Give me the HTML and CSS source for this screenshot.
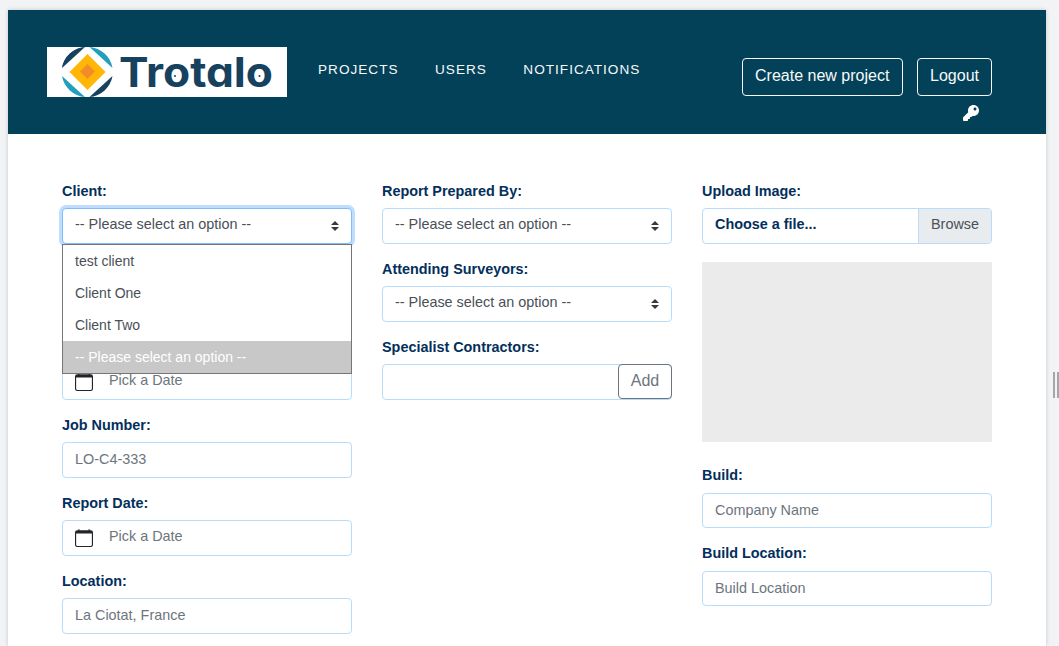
FILE: index.html
```html
<!DOCTYPE html>
<html lang="en">
<head>
<meta charset="utf-8">
<title>Trotalo</title>
<link rel="stylesheet" href="styles.css">
</head>
<body>
<div class="page">
  <header class="header">
    <svg class="logo" viewBox="0 0 240 50" width="240" height="50" role="img" aria-label="Trotalo">
      <rect width="240" height="50" fill="#fff"/>
      <path d="M15 21A25.500 25.500 0 0 1 38 0Q22 6 15 21Z" fill="#17425f"/>
      <path d="M15 21A25.500 25.500 0 0 1 38 0L15 21Z" fill="#17425f"/>
      <path d="M42.500 0A25.500 25.500 0 0 1 65.500 21L42.500 0Z" fill="#239fbd"/>
      <path d="M15 29A25.500 25.500 0 0 0 38 50L15 29Z" fill="#239fbd"/>
      <path d="M65.500 29A25.500 25.500 0 0 1 42.500 50L65.500 29Z" fill="#17425f"/>
      <path d="M40.500 7L58.500 25L40.500 43L22.500 25Z" fill="#ffb606"/>
      <path d="M40.500 17L48 24.500L40.500 32L33 24.500Z" fill="#f28c28"/>
      <text class="wordmark" x="72" y="40" textLength="154" lengthAdjust="spacingAndGlyphs">Trotalo</text>
      <circle cx="128" cy="29" r="1" fill="#17425f"/>
      <circle cx="212.500" cy="29" r="1" fill="#17425f"/>
    </svg>
    <nav class="nav"><a>PROJECTS</a><a>USERS</a><a>NOTIFICATIONS</a></nav>
    <div class="actions">
      <div class="buttons"><a class="btn create">Create new project</a><a class="btn">Logout</a></div>
      <svg class="key" viewBox="0 0 512 512" width="16" height="16"><path fill="#fff" d="M512 176.001C512 273.203 433.202 352 336 352c-11.220 0-22.190-1.062-32.827-3.069l-24.012 27.014A23.999 23.999 0 0 1 261.223 384H224v40c0 13.255-10.745 24-24 24h-40v40c0 13.255-10.745 24-24 24H24c-13.255 0-24-10.745-24-24v-78.059c0-6.365 2.529-12.470 7.029-16.971l161.802-161.802C163.108 213.814 160 195.271 160 176 160 78.798 238.797.001 335.999 0 433.488-.001 512 78.511 512 176.001zM336 128c0 26.510 21.490 48 48 48s48-21.490 48-48-21.490-48-48-48-48 21.490-48 48z"/></svg>
    </div>
  </header>
  <main class="form">
    <section class="column">
      <div class="group first"><div class="label">Client:</div>
        <div class="control select focus">-- Please select an option --<svg class="caret" viewBox="0 0 4 5" width="8" height="10"><path fill="#343a40" d="M2 0L0 2h4zm0 5L0 3h4z"/></svg></div>
        <div class="options"><div>test client</div><div>Client One</div><div>Client Two</div><div class="selected">-- Please select an option --</div></div>
      </div>
      <div class="group"><div class="label"></div><div class="control"></div></div>
      <div class="group"><div class="label"></div>
        <div class="control date"><svg class="calendar" viewBox="0 0 16 16" width="18" height="18"><path fill="#212529" d="M3.500 0a.5.5 0 0 1 .5.5V1h8V.5a.5.5 0 0 1 1 0V1h1a2 2 0 0 1 2 2v11a2 2 0 0 1-2 2H2a2 2 0 0 1-2-2V3a2 2 0 0 1 2-2h1V.5a.5.5 0 0 1 .5-.5zM1 4v10a1 1 0 0 0 1 1h12a1 1 0 0 0 1-1V4H1z"/></svg><span>Pick a Date</span></div></div>
      <div class="group"><div class="label">Job Number:</div><div class="control hint">LO-C4-333</div></div>
      <div class="group"><div class="label">Report Date:</div>
        <div class="control date"><svg class="calendar" viewBox="0 0 16 16" width="18" height="18"><path fill="#212529" d="M3.500 0a.5.5 0 0 1 .5.5V1h8V.5a.5.5 0 0 1 1 0V1h1a2 2 0 0 1 2 2v11a2 2 0 0 1-2 2H2a2 2 0 0 1-2-2V3a2 2 0 0 1 2-2h1V.5a.5.5 0 0 1 .5-.5zM1 4v10a1 1 0 0 0 1 1h12a1 1 0 0 0 1-1V4H1z"/></svg><span>Pick a Date</span></div></div>
      <div class="group last"><div class="label">Location:</div><div class="control hint">La Ciotat, France</div></div>
    </section>
    <section class="column">
      <div class="group"><div class="label">Report Prepared By:</div>
        <div class="control select">-- Please select an option --<svg class="caret" viewBox="0 0 4 5" width="8" height="10"><path fill="#343a40" d="M2 0L0 2h4zm0 5L0 3h4z"/></svg></div></div>
      <div class="group"><div class="label">Attending Surveyors:</div>
        <div class="control select">-- Please select an option --<svg class="caret" viewBox="0 0 4 5" width="8" height="10"><path fill="#343a40" d="M2 0L0 2h4zm0 5L0 3h4z"/></svg></div></div>
      <div class="group"><div class="label">Specialist Contractors:</div>
        <div class="control with-button"><span class="add">Add</span></div></div>
    </section>
    <section class="column">
      <div class="group"><div class="label">Upload Image:</div>
        <div class="control file"><span class="file-name">Choose a file...</span><span class="browse">Browse</span></div></div>
      <div class="preview"></div>
      <div class="group"><div class="label">Build:</div><div class="control hint short">Company Name</div></div>
      <div class="group last"><div class="label">Build Location:</div><div class="control hint short">Build Location</div></div>
    </section>
  </main>
</div>
<div class="handle"></div>
</body>
</html>
```
FILE: styles.css
```css
* { box-sizing: border-box; }
body {
  margin: 0;
  height: 646px;
  overflow: hidden;
  display: flex;
  align-items: flex-start;
  padding: 10px 0 0 8px;
  background: #f1f3f4;
  font-family: "Liberation Sans", Arial, sans-serif;
  font-size: 14.4px;
  line-height: 22px;
}
.page { width: 1038px; height: 636px; flex: none; background: #fff; box-shadow: 0 0 4px rgba(0, 0, 0, .18); }
.header { height: 124px; background: #034158; display: flex; padding-left: 39px; padding-right: 54px; color: #f8f9fa; }
.logo { display: block; margin-top: 37px; flex: none; }
.wordmark { font-family: Inter, sans-serif; font-weight: 700; font-size: 41px; font-feature-settings: "cv11"; fill: #17425f; }
.nav { display: flex; gap: 36.5px; margin: 49px 0 0 31px; font-size: 13.6px; letter-spacing: 1px; }
.actions { margin-left: auto; padding-top: 48px; display: flex; flex-direction: column; align-items: flex-end; }
.buttons { display: flex; gap: 14px; }
.btn { height: 38px; padding: 5px 12px; border: 1px solid #f8f9fa; border-radius: 4px; font-size: 16px; line-height: 24px; }
.create { width: 161px; }
.key { margin: 9px 13px 0 0; }
.form { display: grid; grid-template-columns: repeat(3, 290px); gap: 30px; padding: 46px 54px 0; }
.group { height: 78px; position: relative; }
.last { height: 66px; }
.label { height: 28px; line-height: 22px; font-weight: bold; color: #032f5b; }
.control { height: 36px; border: 1px solid #b8dcfc; border-radius: 4px; padding: 0 12px; line-height: 31px; color: #495057; background: #fff; }
.hint, .date { color: #6c757d; }
.hint { line-height: 33px; }
.short { height: 35px; margin-top: 1px; line-height: 32px; }
.select { display: flex; justify-content: space-between; }
.caret { margin-top: 12px; }
.focus { border-color: #80bdff; box-shadow: 0 0 0 3px #bfdeff; }
.options { position: absolute; z-index: 2; top: 64px; left: 0; width: 290px; height: 130px; border: 1px solid #767676; background: #fff; color: #495057; font-size: 14px; line-height: 32px; }
.options div { height: 32px; padding-left: 12px; }
.options .selected { background: #c8c8c8; color: #fff; }
.date { display: flex; gap: 16px; }
.calendar { margin-top: 8px; }
.with-button { padding: 0; display: flex; justify-content: flex-end; }
.add { width: 54px; height: 35px; margin: -1px -1px 0 0; border: 1px solid #6c757d; border-radius: 4px; font-size: 16px; line-height: 32px; text-align: center; color: #6c757d; }
.file { display: flex; justify-content: space-between; padding-right: 0; overflow: hidden; }
.file-name { font-weight: bold; color: #032f5b; }
.browse { padding: 0 12px; border-left: 1px solid #b8dcfc; background: #e9ecef; }
.preview { height: 180px; margin: 4px 0 22px; background: #ebebeb; }
.handle { width: 6px; height: 26px; margin: 362px 0 0 7px; border: solid #a5a6a8; border-width: 0 2px; }
```
